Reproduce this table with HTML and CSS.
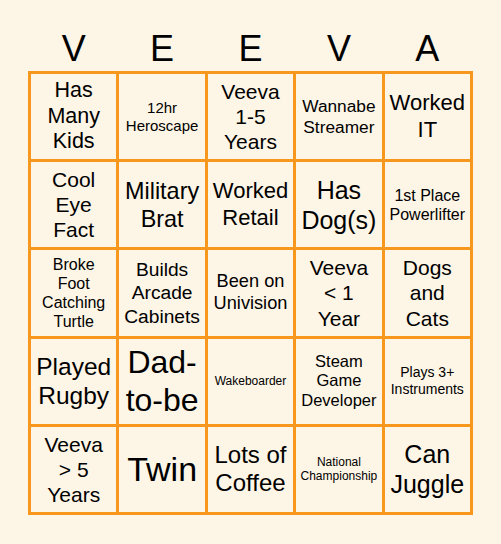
FILE: index.html
```html
<!DOCTYPE html>
<html lang="en">
<head>
<meta charset="utf-8">
<title>Veeva Bingo</title>
<link rel="stylesheet" href="styles.css">
</head>
<body>
<main class="card">
  <div class="header">
    <span>V</span><span>E</span><span>E</span><span>V</span><span>A</span>
  </div>
  <div class="grid">
    <div class="cell fs215">Has<br>Many<br>Kids</div>
    <div class="cell fs15">12hr<br>Heroscape</div>
    <div class="cell fs21">Veeva<br>1-5<br>Years</div>
    <div class="cell fs173">Wannabe<br>Streamer</div>
    <div class="cell fs22">Worked<br>IT</div>

    <div class="cell fs21">Cool<br>Eye<br>Fact</div>
    <div class="cell fs234">Military<br>Brat</div>
    <div class="cell fs22">Worked<br>Retail</div>
    <div class="cell fs25">Has<br>Dog(s)</div>
    <div class="cell fs16">1st Place<br>Powerlifter</div>

    <div class="cell fs16">Broke<br>Foot<br>Catching<br>Turtle</div>
    <div class="cell fs192">Builds<br>Arcade<br>Cabinets</div>
    <div class="cell fs182">Been on<br>Univision</div>
    <div class="cell fs21">Veeva<br>&lt; 1<br>Year</div>
    <div class="cell fs21">Dogs<br>and<br>Cats</div>

    <div class="cell fs245">Played<br>Rugby</div>
    <div class="cell fs32">Dad-<br>to-be</div>
    <div class="cell fs12">Wakeboarder</div>
    <div class="cell fs165">Steam<br>Game<br>Developer</div>
    <div class="cell fs14">Plays 3+<br>Instruments</div>

    <div class="cell fs21">Veeva<br>&gt; 5<br>Years</div>
    <div class="cell fs34">Twin</div>
    <div class="cell fs24">Lots of<br>Coffee</div>
    <div class="cell fs12">National<br>Championship</div>
    <div class="cell fs25">Can<br>Juggle</div>
  </div>
</main>
</body>
</html>
```

FILE: styles.css
```css
html, body {
  margin: 0;
  padding: 0;
  background: #fdf5e6;
}

body {
  font-family: "Liberation Sans", Arial, sans-serif;
  color: #000;
  width: 501px;
  height: 544px;
  overflow: hidden;
}

.card {
  padding: 29px 0 0 28px;
  width: 445px;
}

.header {
  display: grid;
  grid-template-columns: repeat(5, 1fr);
  padding: 0 3px;
  column-gap: 3px;
  font-size: 36px;
  line-height: 40px;
  height: 42px;
  text-align: center;
}

.grid {
  display: grid;
  grid-template-columns: repeat(5, 1fr);
  grid-template-rows: repeat(5, 1fr);
  gap: 3px;
  padding: 3px;
  background: #f7971e;
  width: 445px;
  height: 444px;
  box-sizing: border-box;
}

.cell {
  background: #fdf5e6;
  display: flex;
  align-items: center;
  justify-content: center;
  text-align: center;
  line-height: 1.2;
}

.fs12 { font-size: 12px; }
.fs14 { font-size: 14px; }
.fs15 { font-size: 15px; }
.fs16 { font-size: 16px; }
.fs165 { font-size: 16.5px; }
.fs173 { font-size: 17.3px; }
.fs182 { font-size: 18.2px; }
.fs192 { font-size: 19.2px; }
.fs21 { font-size: 21px; }
.fs215 { font-size: 21.5px; }
.fs22 { font-size: 22px; }
.fs234 { font-size: 23.4px; }
.fs24 { font-size: 24px; }
.fs245 { font-size: 24.5px; }
.fs25 { font-size: 25px; }
.fs32 { font-size: 32px; }
.fs34 { font-size: 34px; }
```
